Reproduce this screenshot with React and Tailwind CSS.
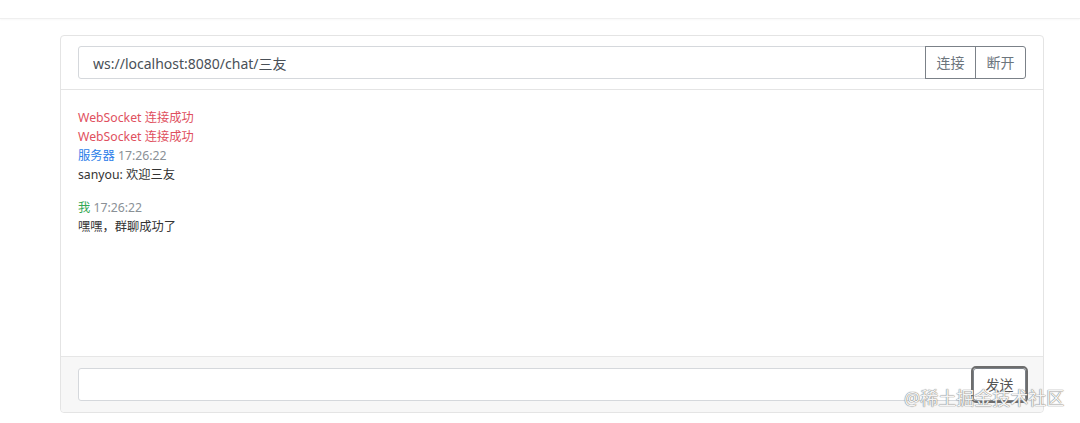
import React, { useState } from "react";

const font = { fontFamily: '"Noto Sans", "Noto Sans CJK SC", sans-serif' };

const App = () => {
  const [url, setUrl] = useState("ws://localhost:8080/chat/三友");
  const [text, setText] = useState("");

  return (
    <div className="relative w-[1080px] h-[423px] bg-white overflow-hidden font-['Noto_Sans','Noto_Sans_CJK_SC',sans-serif]">
      {/* top bar edge */}
      <div className="h-[19px] border-b border-[#efefef] shadow-[0_1px_2px_rgba(0,0,0,0.03)]" />

      <div className="ml-[60px] mt-[16px] w-[984px] h-[378px] flex flex-col border border-[#e4e4e4] rounded-[4px]">
        {/* header */}
        <div className="h-[54px] px-[17px] flex items-center border-b border-[#e4e4e4]">
          <div className="flex w-full h-[33px]">
            <input
              value={url}
              onChange={(e) => setUrl(e.target.value)}
              className="flex-1 h-full border border-[#d5d8dc] rounded-l-[3px] pl-[14px] text-[14px] text-[#495057] outline-none"
              style={font}
            />
            <button className="w-[51px] h-full border border-[#7b8188] text-[14px] text-[#6c757d] -ml-px">
              连接
            </button>
            <button className="w-[51px] h-full border border-[#7b8188] rounded-r-[3px] text-[14px] text-[#6c757d] -ml-px">
              断开
            </button>
          </div>
        </div>

        {/* messages */}
        <div className="flex-1 px-[17px] pt-[18px] text-[12.25px] leading-[19px] text-[#333]">
          <div className="text-[#e0505e]">WebSocket 连接成功</div>
          <div className="text-[#e0505e]">WebSocket 连接成功</div>
          <div>
            <span className="text-[#2b7de9]">服务器</span>{" "}
            <span className="text-[#8a9096]">17:26:22</span>
          </div>
          <div className="mb-[14px]">sanyou: 欢迎三友</div>
          <div>
            <span className="text-[#34a853]">我</span>{" "}
            <span className="text-[#8a9096]">17:26:22</span>
          </div>
          <div>嘿嘿，群聊成功了</div>
        </div>

        {/* footer */}
        <div className="h-[56px] px-[17px] flex items-center bg-[#f7f7f7] border-t border-[#e6e6e6] rounded-b-[4px]">
          <div className="flex w-full h-[33px]">
            <input
              value={text}
              onChange={(e) => setText(e.target.value)}
              className="flex-1 h-full bg-white border border-[#d5d8dc] rounded-l-[3px] px-[10px] text-[14px] outline-none"
            />
            <button className="relative w-[53px] h-full bg-white border border-[#7b8188] text-[14px] text-[#555] outline-2 outline-[#6d6d6d] outline-offset-0 rounded-[3px]">
              发送
            </button>
          </div>
        </div>
      </div>

      {/* watermark */}
      <div className="absolute left-[904px] top-[386px] text-[18px] leading-[24px] text-[#f4f4f4] [text-shadow:0_0_1px_#777,0_0_1px_#777]">
        @稀土掘金技术社区
      </div>
    </div>
  );
};

export default App;
